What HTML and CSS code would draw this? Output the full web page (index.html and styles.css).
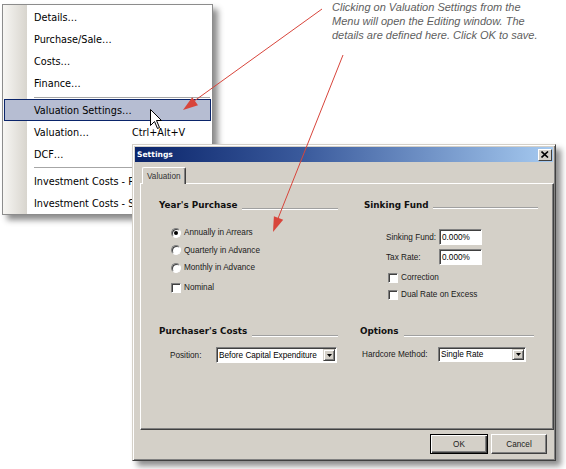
FILE: index.html
```html
<!DOCTYPE html>
<html>
<head>
<meta charset="utf-8">
<link rel="stylesheet" href="styles.css">
</head>
<body>
<div class="canvas">
  <div class="menu">
    <div class="item"><span class="label">Details…</span></div>
    <div class="item"><span class="label">Purchase/Sale…</span></div>
    <div class="item"><span class="label">Costs…</span></div>
    <div class="item"><span class="label">Finance…</span></div>
    <div class="sep"></div>
    <div class="item hot"><span class="label">Valuation Settings…</span></div>
    <div class="item"><span class="label">Valuation…</span><span class="key">Ctrl+Alt+V</span></div>
    <div class="item"><span class="label">DCF…</span><span class="key">Ctrl+Alt+D</span></div>
    <div class="sep sep2"></div>
    <div class="item"><span class="label">Investment Costs - Purchase</span></div>
    <div class="item"><span class="label">Investment Costs - Sale</span></div>
  </div>

  <div class="callout">Clicking on Valuation Settings from the<br>Menu will open the Editing window. The<br>details are defined here. Click OK to save.</div>

  <div class="dialog">
    <div class="titlebar">
      <span class="title">Settings</span>
      <span class="close"><svg width="8" height="7" viewBox="0 0 8 7"><path d="M0.5 0.5 L7 6.5 M7 0.5 L0.5 6.5" stroke="#000" stroke-width="1.6"/></svg></span>
    </div>
    <div class="tabs"><span class="tab">Valuation</span></div>
    <div class="panel">
      <div class="grid">
        <div class="group">
          <div class="ghead"><span class="gtitle">Year's Purchase</span><span class="gline"></span></div>
          <div class="radios">
            <div class="opt"><span class="radio on"></span><span>Annually in Arrears</span></div>
            <div class="opt"><span class="radio"></span><span>Quarterly in Advance</span></div>
            <div class="opt"><span class="radio"></span><span>Monthly in Advance</span></div>
            <div class="opt chk-nominal"><span class="check"></span><span>Nominal</span></div>
          </div>
        </div>
        <div class="group g-sink">
          <div class="ghead"><span class="gtitle">Sinking Fund</span><span class="gline"></span></div>
          <div class="fields">
            <div class="field"><span class="flabel">Sinking Fund:</span><span class="input">0.000%</span></div>
            <div class="field"><span class="flabel">Tax Rate:</span><span class="input">0.000%</span></div>
          </div>
          <div class="checks">
            <div class="opt"><span class="check"></span><span>Correction</span></div>
            <div class="opt"><span class="check"></span><span>Dual Rate on Excess</span></div>
          </div>
        </div>
        <div class="group g-costs">
          <div class="ghead"><span class="gtitle">Purchaser's Costs</span><span class="gline"></span></div>
          <div class="field sel-row"><span class="flabel">Position:</span><span class="select wide"><span class="seltext">Before Capital Expenditure</span><span class="drop"><svg width="5" height="3" viewBox="0 0 5 3"><path d="M0 0 H5 L2.5 3 Z" fill="#000"/></svg></span></span></div>
        </div>
        <div class="group g-opts">
          <div class="ghead"><span class="gtitle">Options</span><span class="gline"></span></div>
          <div class="field sel-row"><span class="flabel">Hardcore Method:</span><span class="select narrow"><span class="seltext">Single Rate</span><span class="drop"><svg width="5" height="3" viewBox="0 0 5 3"><path d="M0 0 H5 L2.5 3 Z" fill="#000"/></svg></span></span></div>
        </div>
      </div>
    </div>
    <div class="buttons">
      <span class="btn default"><span>OK</span></span>
      <span class="btn cancel"><span>Cancel</span></span>
    </div>
  </div>

  <svg class="arrows" width="566" height="469" viewBox="0 0 566 469">
    <line x1="322" y1="9" x2="190" y2="104" stroke="#d8453b" stroke-width="1"/>
    <polygon points="183,110 198,105.2 192.2,97.2" fill="#d8453b"/>
    <line x1="343" y1="55" x2="277" y2="221" stroke="#d8453b" stroke-width="1"/>
    <polygon points="273,232 283.2,219.8 273.9,216.2" fill="#d8453b"/>
  </svg>

  <svg class="cursor" width="13" height="21" viewBox="0 0 13 21">
    <path d="M0.5 0.5 L0.5 16.5 L4.5 12.5 L7.5 19.5 L9.5 18.5 L6.5 11.5 L11.5 11.5 Z" fill="#fff" stroke="#000" stroke-width="1" stroke-linejoin="miter"/>
  </svg>
</div>
</body>
</html>
```

FILE: styles.css
```css
* { box-sizing: border-box; }
html, body { margin: 0; padding: 0; background: #fff; }
.canvas {
  position: relative;
  width: 566px;
  height: 469px;
  overflow: hidden;
  background: #fff;
}

/* ---------- context menu ---------- */
.menu {
  position: absolute;
  left: 2px;
  top: 4px;
  width: 211px;
  height: 211px;
  border: 1px solid #8c8c8c;
  padding-top: 1px;
  background: linear-gradient(to right, #f7f6f3 0, #d8d5ce 24px, #ffffff 24px);
  box-shadow: 5px 5px 6px rgba(0,0,0,0.45);
  font-family: "DejaVu Sans", sans-serif;
  font-size: 9.7px;
  color: #000;
  overflow: hidden;
}
.item {
  display: flex;
  align-items: center;
  height: 22px;
  margin: 0 1px;
  padding-left: 29px;
  border: 1px solid transparent;
  white-space: nowrap;
}
.item .label { width: 98px; flex: none; }
.item .key { flex: none; }
.item.hot {
  background: #b6bdd2;
  border-color: #0a246a;
}
.sep {
  height: 5px;
  margin-left: 31px;
  margin-right: 2px;
  padding-top: 3px;
}
.sep::after {
  content: "";
  display: block;
  height: 1px;
  background: #a6a6a6;
}
.sep2 { padding-top: 2px; }

/* ---------- callout ---------- */
.callout {
  position: absolute;
  left: 332px;
  top: 0;
  font-family: "Liberation Sans", Arial, sans-serif;
  font-style: italic;
  font-size: 11px;
  line-height: 14px;
  color: #5e5e5e;
  white-space: nowrap;
}

/* ---------- dialog ---------- */
.dialog {
  position: absolute;
  left: 132px;
  top: 144px;
  width: 424px;
  height: 317px;
  background: #d4d0c8;
  border: 1px solid;
  border-color: #d4d0c8 #404040 #404040 #d4d0c8;
  box-shadow: inset 1px 1px 0 #fff, inset -1px -1px 0 #808080, 5px 5px 6px rgba(0,0,0,0.45);
  padding: 1px;
  display: flex;
  flex-direction: column;
  font-family: "Liberation Sans", Arial, sans-serif;
  font-size: 8.2px;
  color: #000;
}
.titlebar {
  height: 15px;
  margin: 1px 1px 0 1px;
  background: linear-gradient(to right, #0a246a 0%, #3a5a9c 40%, #a6caf0 100%);
  display: flex;
  align-items: center;
  justify-content: space-between;
  padding: 0 1px 0 2px;
}
.title {
  color: #fff;
  font-family: "DejaVu Sans", sans-serif;
  font-weight: bold;
  font-size: 7.6px;
}
.close {
  width: 14px;
  height: 12px;
  background: #d4d0c8;
  border: 1px solid;
  border-color: #fff #404040 #404040 #fff;
  display: flex;
  align-items: center;
  justify-content: center;
}
.tabs {
  display: flex;
  padding-left: 8px;
  margin-top: 5px;
  position: relative;
  z-index: 1;
}
.tab {
  height: 17px;
  padding: 0 4px;
  display: flex;
  align-items: center;
  background: #d4d0c8;
  border-top: 1px solid #fff;
  border-left: 1px solid #fff;
  border-right: 1px solid #404040;
  box-shadow: inset -1px 0 0 #808080;
  margin-bottom: -1px;
  border-radius: 2px 2px 0 0;
  color: #333;
}
.panel {
  height: 247px;
  margin-left: 6px;
  margin-right: 0;
  border: 1px solid;
  border-color: #fff #404040 #404040 #fff;
  box-shadow: inset -1px -1px 0 #808080;
}
.grid {
  display: grid;
  grid-template-columns: 180px 180px;
  grid-template-rows: 126px auto;
  column-gap: 21px;
  padding: 14px 0 0 18px;
}
.ghead {
  display: flex;
  align-items: center;
  height: 13px;
  position: relative;
}
.gtitle {
  font-family: "DejaVu Sans", sans-serif;
  font-weight: bold;
  font-size: 8.8px;
  color: #111;
  white-space: nowrap;
}
.gline {
  flex: 1;
  align-self: flex-end;
  height: 2px;
  margin: 0 1px 1px 5px;
  border-top: 1px solid #a0a0a0;
  border-bottom: 1px solid #fff;
}
.g-sink { padding-left: 4px; }
.g-sink .gline { margin-left: 4px; margin-right: 2px; margin-bottom: 2px; }
.g-costs .gline { margin-left: 5px; margin-bottom: 0; }
.g-opts .gline { margin-left: 5px; margin-right: 6px; margin-bottom: 0; }

.radios { margin-top: 13px; padding-left: 12px; }
.opt {
  display: flex;
  align-items: center;
  height: 17.5px;
  gap: 3px;
  white-space: nowrap;
  color: #1a1a1a;
}
.chk-nominal { margin-top: 2.5px; }
.radio {
  width: 10px;
  height: 10px;
  border-radius: 50%;
  background: #fff;
  border: 1px solid;
  border-color: #808080 #fff #fff #808080;
  box-shadow: inset 1px 1px 0 #404040;
  display: flex;
  align-items: center;
  justify-content: center;
  flex: none;
}
.radio.on::after {
  content: "";
  width: 4px;
  height: 4px;
  border-radius: 50%;
  background: #000;
}
.check {
  width: 10px;
  height: 10px;
  background: #fff;
  border: 1px solid;
  border-color: #808080 #fff #fff #808080;
  box-shadow: inset 1px 1px 0 #404040;
  flex: none;
}

.fields { margin-top: 18px; padding-left: 22px; display: flex; flex-direction: column; gap: 4px; }
.field { display: flex; align-items: center; white-space: nowrap; }
.flabel { width: 53px; flex: none; color: #1a1a1a; }
.input {
  width: 43px;
  height: 16px;
  background: #fff;
  border: 1px solid;
  border-color: #808080 #fff #fff #808080;
  box-shadow: inset 1px 1px 0 #404040;
  padding-left: 2px;
  display: flex;
  align-items: center;
}
.checks { margin-top: 4px; padding-left: 24px; }
.checks .opt { height: 17px; }

.sel-row { margin-top: 10px; }
.g-costs .sel-row { padding-left: 11px; }
.g-costs .flabel { width: 46px; }
.g-opts .sel-row { padding-left: 2px; }
.g-opts .flabel { width: 76px; }
.select {
  height: 16px;
  background: #fff;
  border: 1px solid;
  border-color: #808080 #fff #fff #808080;
  box-shadow: inset 1px 1px 0 #404040;
  display: flex;
  align-items: center;
  justify-content: space-between;
  padding: 1px 1px 1px 2px;
}
.select.wide { width: 121px; }
.select.narrow { width: 88px; height: 15px; }
.drop {
  width: 12px;
  height: 12px;
  background: #d4d0c8;
  border: 1px solid;
  border-color: #d4d0c8 #404040 #404040 #d4d0c8;
  box-shadow: inset 1px 1px 0 #fff, inset -1px -1px 0 #808080;
  display: flex;
  align-items: center;
  justify-content: center;
}
.select.narrow .drop { height: 11px; }

.buttons {
  display: flex;
  justify-content: flex-end;
  gap: 3px;
  margin-top: 4px;
  padding-right: 7px;
}
.btn {
  height: 20px;
  display: flex;
  align-items: center;
  justify-content: center;
  background: #d4d0c8;
  border: 1px solid;
  border-color: #fff #404040 #404040 #fff;
  box-shadow: inset -1px -1px 0 #808080;
  color: #222;
}
.btn.default {
  width: 58px;
  border: 1px solid #000;
  box-shadow: inset 1px 1px 0 #fff, inset -1px -1px 0 #404040, inset -2px -2px 0 #808080;
}
.btn.cancel { width: 56px; }

/* ---------- overlays ---------- */
.arrows {
  position: absolute;
  left: 0;
  top: 0;
  pointer-events: none;
}
.cursor {
  position: absolute;
  left: 150px;
  top: 109px;
}
```
